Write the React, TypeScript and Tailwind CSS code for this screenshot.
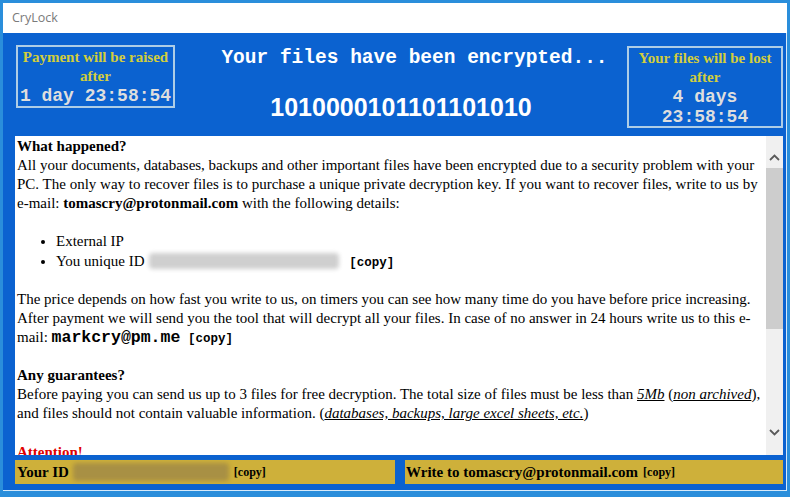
import React from "react";

const serif = "font-['Liberation_Serif','Times_New_Roman',serif]";
const mono = "font-['Liberation_Mono','Courier_New',monospace]";

function Blur({ className }: { className: string }) {
  return <span className={`inline-block align-[-3px] leading-none rounded-sm blur-[2px] ${className}`} />;
}

function Copy({ className = "" }: { className?: string }) {
  return <span className={`${mono} font-bold text-[12.5px] leading-none ${className}`}>[copy]</span>;
}

function TimerBox({ title, lines, className }: { title: string; lines: string[]; className: string }) {
  return (
    <div className={`flex flex-col items-center border-2 border-[#aecde6] ${className}`}>
      <div className={`${serif} font-bold text-[15px] leading-[19px] text-[#d3ce3c]`}>{title}</div>
      <div className={`${serif} font-bold text-[15px] leading-[19px] text-[#d3ce3c]`}>after</div>
      {lines.map((l) => (
        <div key={l} className={`${mono} font-bold text-[18px] leading-[20px] text-[#dedede] whitespace-nowrap`}>
          {l}
        </div>
      ))}
    </div>
  );
}

function Chevron({ up }: { up?: boolean }) {
  return (
    <svg width="11" height="7" viewBox="0 0 11 7" className="text-[#5a5a5a]">
      <path
        d={up ? "M1 6 L5.5 1.5 L10 6" : "M1 1 L5.5 5.5 L10 1"}
        fill="none"
        stroke="currentColor"
        strokeWidth="1.8"
      />
    </svg>
  );
}

export default function App() {
  return (
    <div className="w-[790px] h-[497px] bg-[#2a8edb] px-[3px] pt-[3px] overflow-hidden">
      {/* title bar */}
      <div className="h-[30px] bg-white flex items-center pl-[9px]">
        <span className="font-['Open_Sans','Noto_Sans',sans-serif] text-[12.5px] text-[#7a7a7a]">CryLock</span>
      </div>

      {/* body */}
      <div className="h-[458px] bg-[#0b62d0] border-r border-b border-[#d6eafa] pl-[12px] pr-[3px] flex flex-col">
        {/* header */}
        <div className="h-[103px] flex items-start shrink-0">
          <TimerBox
            title="Payment will be raised"
            lines={["1 day 23:58:54"]}
            className="ml-[1px] mt-[12px] w-[159px] h-[63px] pt-[1px]"
          />
          <div className="flex-1 flex flex-col items-center">
            <div className={`${mono} font-bold text-[19.5px] leading-[22px] text-white mt-[14px] ml-[27px] whitespace-nowrap`}>
              Your files have been encrypted...
            </div>
            <div className="font-['Liberation_Sans',Arial,sans-serif] font-bold text-[25px] leading-[28px] text-white mt-[24px]">
              1010000101101101010
            </div>
          </div>
          <TimerBox
            title="Your files will be lost"
            lines={["4 days", "23:58:54"]}
            className="mt-[13px] w-[156px] h-[82px] pt-[1px]"
          />
        </div>

        {/* content */}
        <div className="h-[319px] bg-white flex shrink-0">
          <div className={`flex-1 overflow-hidden pl-[2px] pt-[1px] ${serif} text-[15px] leading-[19.1px] text-black`}>
            <div className="font-bold">What happened?</div>
            <div>
              All your documents, databases, backups and other important files have been encrypted due to a security
              problem with your PC. The only way to recover files is to purchase a unique private decryption key. If
              you want to recover files, write to us by e-mail: <b>tomascry@protonmail.com</b> with the following
              details:
            </div>
            <div className="h-[19.1px]" />
            <ul className="list-disc pl-[39px]">
              <li>External IP</li>
              <li>
                You unique ID <Blur className="ml-[1px] w-[190px] h-[16px] bg-[#cfcfcf]" />
                <Copy className="ml-[10px]" />
              </li>
            </ul>
            <div className="h-[19.1px]" />
            <div>
              The price depends on how fast you write to us, on timers you can see how many time do you have before
              price increasing. After payment we will send you the tool that will decrypt all your files. In case of no
              answer in 24 hours write us to this e-mail:{" "}
              <span className={`${mono} font-bold text-[16.5px] leading-none`}>markcry@pm.me</span>{" "}
              <Copy className="ml-[4px]" />
            </div>
            <div className="h-[19.1px]" />
            <div className="font-bold">Any guarantees?</div>
            <div>
              Before paying you can send us up to 3 files for free decryption. The total size of files must be less
              than <i className="underline">5Mb</i> (<i className="underline">non archived</i>), and files should not
              contain valuable information. (<i className="underline">databases, backups, large excel sheets, etc.</i>)
            </div>
            <div className="h-[19.1px]" />
            <div className="font-bold text-[#e00000]">Attention!</div>
          </div>
          {/* scrollbar */}
          <div className="w-[17px] bg-[#f0f0f0] flex flex-col items-center">
            <div className="h-[32px] flex items-center justify-center pt-[10px]">
              <Chevron up />
            </div>
            <div className="w-[17px] h-[161px] bg-[#cdcdcd]" />
            <div className="flex-1" />
            <div className="h-[40px] flex items-center justify-center pb-[6px]">
              <Chevron />
            </div>
          </div>
        </div>

        {/* bottom bar */}
        <div className={`mt-[5px] h-[24px] flex gap-[10px] ${serif} font-bold text-[15px] text-black`}>
          <div className="w-[380px] bg-[#ceb03a] flex items-center pl-[2px] whitespace-nowrap">
            Your ID
            <Blur className="ml-[4px] w-[156px] h-[18px] bg-[#a89044]" />
            <span className="text-[12px] ml-[5px]">[copy]</span>
          </div>
          <div className="flex-1 bg-[#ceb03a] flex items-center pl-[1px] whitespace-nowrap">
            Write to tomascry@protonmail.com
            <span className="text-[12px] ml-[5px]">[copy]</span>
          </div>
        </div>
      </div>
    </div>
  );
}
